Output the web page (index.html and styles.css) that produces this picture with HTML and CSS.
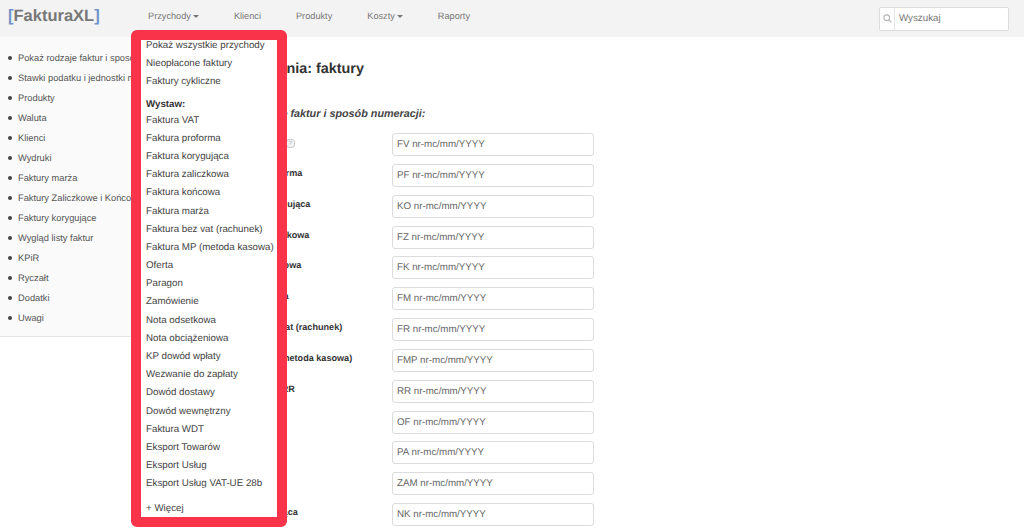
FILE: index.html
```html
<!DOCTYPE html>
<html lang="pl">
<head>
<meta charset="utf-8">
<title>FakturaXL</title>
<link rel="stylesheet" href="styles.css">
</head>
<body>
<header class="navbar">
  <a class="logo"><span class="br">[</span>FakturaXL<span class="br">]</span></a>
  <nav class="nav">
    <a class="nav-item">Przychody<i class="caret"></i></a>
    <a class="nav-item">Klienci</a>
    <a class="nav-item">Produkty</a>
    <a class="nav-item">Koszty<i class="caret"></i></a>
    <a class="nav-item">Raporty</a>
  </nav>
  <div class="search">
    <span class="search-icon">
      <svg width="9" height="9" viewBox="0 0 12 12" fill="none" stroke="#b5b5b5" stroke-width="1.5"><circle cx="5" cy="5" r="3.8"/><path d="M8 8l3.2 3.2"/></svg>
    </span>
    <span class="search-input">Wyszukaj</span>
  </div>
</header>
<div class="page">
  <aside class="sidebar">
    <ul class="side-list">
      <li>Pokaż rodzaje faktur i sposób numeracji</li>
      <li>Stawki podatku i jednostki miary</li>
      <li>Produkty</li>
      <li>Waluta</li>
      <li>Klienci</li>
      <li>Wydruki</li>
      <li>Faktury marża</li>
      <li>Faktury Zaliczkowe i Końcowe</li>
      <li>Faktury korygujące</li>
      <li>Wygląd listy faktur</li>
      <li>KPiR</li>
      <li>Ryczałt</li>
      <li>Dodatki</li>
      <li>Uwagi</li>
    </ul>
  </aside>
  <main class="content">
    <h1 class="title">Ustawienia: faktury</h1>
    <h2 class="subtitle">Rodzaje faktur i sposób numeracji:</h2>
    <div class="form">
      <div class="row"><label>Faktura VAT <span class="help">?</span></label><span class="field">FV nr-mc/mm/YYYY</span></div>
      <div class="row"><label>Faktura proforma</label><span class="field">PF nr-mc/mm/YYYY</span></div>
      <div class="row"><label>Faktura korygująca</label><span class="field">KO nr-mc/mm/YYYY</span></div>
      <div class="row"><label>Faktura zaliczkowa</label><span class="field">FZ nr-mc/mm/YYYY</span></div>
      <div class="row"><label>Faktura końcowa</label><span class="field">FK nr-mc/mm/YYYY</span></div>
      <div class="row"><label>Faktura marża</label><span class="field">FM nr-mc/mm/YYYY</span></div>
      <div class="row"><label>Faktura bez vat (rachunek)</label><span class="field">FR nr-mc/mm/YYYY</span></div>
      <div class="row"><label>Faktura MP (metoda kasowa)</label><span class="field">FMP nr-mc/mm/YYYY</span></div>
      <div class="row"><label>Faktura VAT RR</label><span class="field">RR nr-mc/mm/YYYY</span></div>
      <div class="row"><label>Oferta</label><span class="field">OF nr-mc/mm/YYYY</span></div>
      <div class="row"><label>Paragon</label><span class="field">PA nr-mc/mm/YYYY</span></div>
      <div class="row"><label>Zamówienie</label><span class="field">ZAM nr-mc/mm/YYYY</span></div>
      <div class="row"><label>Nota korygująca</label><span class="field">NK nr-mc/mm/YYYY</span></div>
    </div>
  </main>
</div>
<div class="dropdown">
  <ul class="menu">
    <li>Pokaż wszystkie przychody</li>
    <li>Nieopłacone faktury</li>
    <li>Faktury cykliczne</li>
    <li class="menu-head">Wystaw:</li>
    <li>Faktura VAT</li>
    <li>Faktura proforma</li>
    <li>Faktura korygująca</li>
    <li>Faktura zaliczkowa</li>
    <li>Faktura końcowa</li>
    <li>Faktura marża</li>
    <li>Faktura bez vat (rachunek)</li>
    <li>Faktura MP (metoda kasowa)</li>
    <li>Oferta</li>
    <li>Paragon</li>
    <li>Zamówienie</li>
    <li>Nota odsetkowa</li>
    <li>Nota obciążeniowa</li>
    <li>KP dowód wpłaty</li>
    <li>Wezwanie do zapłaty</li>
    <li>Dowód dostawy</li>
    <li>Dowód wewnętrzny</li>
    <li>Faktura WDT</li>
    <li>Eksport Towarów</li>
    <li>Eksport Usług</li>
    <li>Eksport Usług VAT-UE 28b</li>
    <li class="menu-more">+ Więcej</li>
  </ul>
</div>
</body>
</html>
```
FILE: styles.css
```css
* { box-sizing: border-box; }
html, body { height: 100%; overflow: hidden; }
body {
  margin: 0;
  position: relative;
  background: #fff;
  color: #333;
  font-family: "Liberation Sans", Arial, sans-serif;
  font-size: 10px;
  text-rendering: geometricPrecision;
}
.navbar {
  height: 37px;
  background: #f3f3f3;
  display: flex;
  align-items: center;
  padding: 0 15px 5px 8px;
}
.logo {
  width: 140px;
  font-size: 16.5px;
  font-weight: bold;
  color: #777;
  line-height: 20px;
}
.br { color: #6f94c9; }
.nav { display: flex; flex: 1; gap: 35px; }
.nav-item {
  color: #777;
  font-size: 9.2px;
  line-height: 12px;
  display: flex;
  align-items: center;
}
.caret {
  display: inline-block;
  margin-left: 2px;
  margin-top: 1px;
  border-top: 3px solid #777;
  border-left: 3px solid transparent;
  border-right: 3px solid transparent;
}
.search {
  width: 130px;
  height: 24px;
  margin-top: 5px;
  background: #fff;
  border: 1px solid #ddd;
  border-radius: 2px;
  display: flex;
  align-items: center;
}
.search-icon {
  width: 15px;
  height: 100%;
  border-right: 1px solid #e4e4e4;
  display: flex;
  align-items: center;
  justify-content: center;
}
.search-input { padding-left: 4px; color: #777; font-size: 9.75px; }
.page { display: flex; align-items: flex-start; }
.sidebar {
  width: 217px;
  height: 300px;
  background: #fafafa;
  border-bottom: 1px solid #e6e6e6;
  padding-top: 11px;
  flex: none;
}
.side-list { list-style: none; margin: 0; padding: 0; }
.side-list li {
  height: 20px;
  line-height: 20px;
  padding-left: 18px;
  position: relative;
  font-size: 9.3px;
  color: #555;
  white-space: nowrap;
}
.side-list li::before {
  content: "";
  position: absolute;
  left: 8px;
  top: 8px;
  width: 4px;
  height: 4px;
  border-radius: 50%;
  background: #444;
}
.content { flex: 1; }
.title {
  margin: 24px 0 0 15px;
  font-size: 14.4px;
  line-height: 16px;
  font-weight: bold;
  color: #333;
}
.subtitle {
  margin: 30px 0 0 29px;
  font-size: 10.8px;
  line-height: 14px;
  font-weight: bold;
  font-style: italic;
  color: #444;
}
.form { margin-top: 12px; display: flex; flex-direction: column; }
.row { display: flex; height: 30.85px; }
.row label {
  width: 175px;
  flex: none;
  padding: 3px 0 0 10px;
  font-size: 9.1px;
  font-weight: bold;
  color: #333;
  line-height: 12px;
}
.help {
  display: inline-block;
  width: 9px;
  height: 9px;
  margin-left: 4px;
  line-height: 8px;
  border: 1px solid #ccc;
  border-radius: 3px;
  font-size: 6px;
  font-weight: normal;
  text-align: center;
  color: #aaa;
  background: #f2f2f2;
}
.field {
  width: 202px;
  height: 23px;
  border: 1px solid #dcdcdc;
  border-radius: 3px;
  padding-left: 4px;
  line-height: 21px;
  font-size: 9.75px;
  color: #666;
}
.dropdown {
  position: absolute;
  left: 131px;
  top: 30px;
  width: 156px;
  height: 497px;
  background: #fff;
  border: 10px solid #f8334a;
  border-radius: 6px;
  overflow: hidden;
}
.menu {
  list-style: none;
  margin: -3px 0 0;
  padding: 0;
}
.menu li {
  height: 18.2px;
  line-height: 18.2px;
  padding-left: 5px;
  font-size: 9.75px;
  color: #444;
  white-space: nowrap;
}
.menu .menu-head {
  font-weight: bold;
  margin-top: 5px;
  height: 15px;
  line-height: 15px;
  color: #333;
}
.menu .menu-more { margin-top: 6px; }
```
